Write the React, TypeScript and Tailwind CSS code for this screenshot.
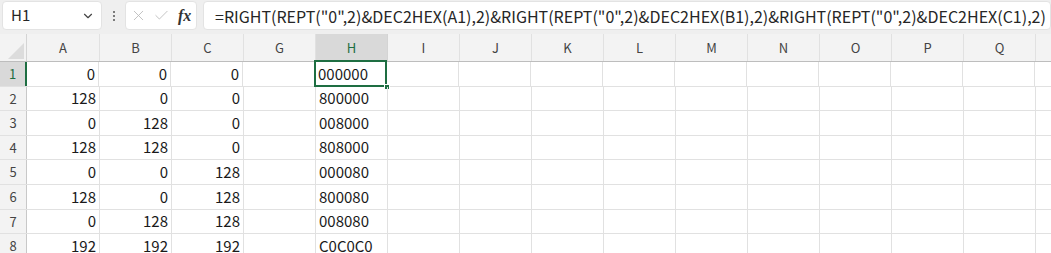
import { ChevronDown, X, Check } from "lucide-react";

const COLS = [
  { key: "A", w: 73 },
  { key: "B", w: 72 },
  { key: "C", w: 72 },
  { key: "G", w: 72 },
  { key: "H", w: 72 },
  { key: "I", w: 72 },
  { key: "J", w: 72 },
  { key: "K", w: 72 },
  { key: "L", w: 72 },
  { key: "M", w: 72 },
  { key: "N", w: 72 },
  { key: "O", w: 72 },
  { key: "P", w: 72 },
  { key: "Q", w: 72 },
  { key: "", w: 40 },
];

const ROWS: [number, number, number, string][] = [
  [0, 0, 0, "000000"],
  [128, 0, 0, "800000"],
  [0, 128, 0, "008000"],
  [128, 128, 0, "808000"],
  [0, 0, 128, "000080"],
  [128, 0, 128, "800080"],
  [0, 128, 128, "008080"],
  [192, 192, 192, "C0C0C0"],
];

const FORMULA =
  '=RIGHT(REPT("0",2)&DEC2HEX(A1),2)&RIGHT(REPT("0",2)&DEC2HEX(B1),2)&RIGHT(REPT("0",2)&DEC2HEX(C1),2)';

function FormulaBar() {
  return (
    <div className="flex h-[34px] items-start gap-0 bg-[#efefef] pt-[1px] pl-[2px]">
      <div className="flex h-[29px] w-[100px] items-center justify-between rounded-[4px] border border-[#e3e3e3] bg-white pl-[8px] pr-[6px]">
        <span className="text-[15px] text-[#262626]">H1</span>
        <ChevronDown size={14} strokeWidth={2} className="text-[#444]" />
      </div>
      <div className="flex h-[29px] w-[23px] flex-col items-center justify-center gap-[2px]">
        <span className="h-[2px] w-[2px] rounded-full bg-[#555]" />
        <span className="h-[2px] w-[2px] rounded-full bg-[#555]" />
        <span className="h-[2px] w-[2px] rounded-full bg-[#555]" />
      </div>
      <div className="flex h-[29px] w-[72px] items-center gap-[6px] rounded-[4px] border border-[#e3e3e3] bg-white pl-[4px]">
        <X size={17} strokeWidth={1.2} className="text-[#b8b8b8]" />
        <Check size={17} strokeWidth={1.2} className="text-[#b8b8b8]" />
        <span className="ml-[2px] font-['Liberation_Serif',serif] text-[16px] font-bold italic text-[#333]">fx</span>
      </div>
      <div className="ml-[6px] flex h-[29px] flex-1 items-center rounded-[4px] border border-[#e3e3e3] bg-white pl-[11px]">
        <span className="whitespace-nowrap text-[16px] text-[#262626]">{FORMULA}</span>
      </div>
    </div>
  );
}

function HeaderRow() {
  return (
    <div className="flex h-[28px] border-b border-[#bdbdbd] bg-[#f3f3f3]">
      <div className="relative w-[27px] shrink-0 border-r border-[#d4d4d4]">
        <div className="absolute bottom-[2px] right-[2px] h-0 w-0 border-b-[16px] border-l-[16px] border-b-[#dcdcdc] border-l-transparent" />
      </div>
      {COLS.map((c, i) => (
        <div
          key={i}
          style={{ width: c.w }}
          className={
            c.key === "H"
              ? "flex shrink-0 items-center justify-center border-r border-[#d4d4d4] bg-[#d9d9d9] text-[13px] text-[#1e6e42]"
              : "flex shrink-0 items-center justify-center border-r border-[#e1e1e1] text-[13px] text-[#444]"
          }
        >
          {c.key}
        </div>
      ))}
    </div>
  );
}

function Row({ idx, data }: { idx: number; data: [number, number, number, string] }) {
  const sel = idx === 1;
  return (
    <div className="flex h-[24.6px] border-b border-[#e1e1e1]">
      <div
        className={
          sel
            ? "flex w-[27px] shrink-0 items-center justify-center border-r-2 border-[#1e6e42] bg-[#d9d9d9] text-[13px] text-[#1e6e42]"
            : "flex w-[27px] shrink-0 items-center justify-center border-r border-[#c8c8c8] bg-[#f3f3f3] text-[13px] text-[#444]"
        }
      >
        {idx}
      </div>
      {COLS.map((c, i) => {
        let content: React.ReactNode = null;
        let align = "justify-end pr-[3px]";
        if (i < 3) content = data[i];
        if (c.key === "H") {
          content = data[3];
          align = "justify-start pl-[3px]";
        }
        return (
          <div
            key={i}
            style={{ width: i === 0 && sel ? c.w - 1 : c.w }}
            className={`relative flex shrink-0 items-center border-r border-[#e1e1e1] text-[15px] text-[#1a1a1a] ${align}`}
          >
            {content}
            {sel && c.key === "H" && (
              <>
                <div className="pointer-events-none absolute -top-[2px] -left-[1px] -right-[1px] -bottom-[1px] border-2 border-[#1e6e42]" />
                <div className="absolute -right-[4px] -bottom-[4px] h-[6px] w-[6px] border border-white bg-[#1e6e42]" />
              </>
            )}
          </div>
        );
      })}
    </div>
  );
}

export default function App() {
  return (
    <div className="h-[253px] w-[1051px] overflow-hidden bg-white font-['Noto_Sans_CJK_JP','Noto_Sans',sans-serif]">
      <FormulaBar />
      <HeaderRow />
      {ROWS.map((r, i) => (
        <Row key={i} idx={i + 1} data={r} />
      ))}
    </div>
  );
}
